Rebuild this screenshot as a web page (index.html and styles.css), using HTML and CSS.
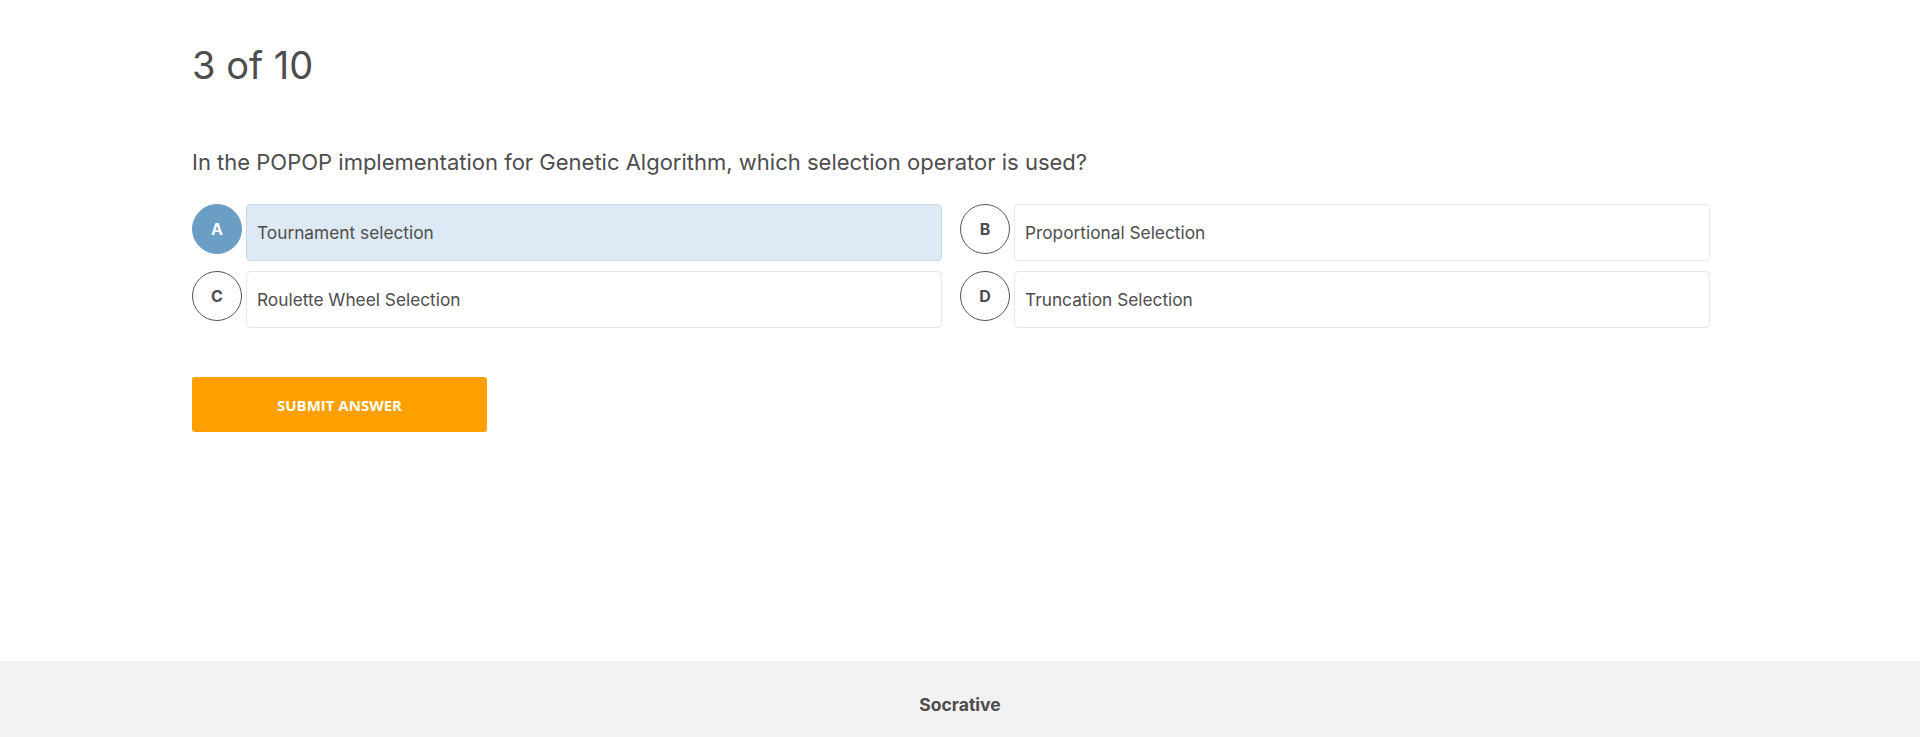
FILE: index.html
```html
<!DOCTYPE html>
<html lang="en">
<head>
<meta charset="utf-8">
<title>Socrative</title>
<link rel="stylesheet" href="styles.css">
</head>
<body>
<div class="page">
  <main class="main">
    <h1 class="progress">3 of 10</h1>
    <p class="question">In the POPOP implementation for Genetic Algorithm, which selection operator is used?</p>
    <div class="options">
      <div class="option selected">
        <span class="letter">A</span>
        <span class="answer">Tournament selection</span>
      </div>
      <div class="option">
        <span class="letter">B</span>
        <span class="answer">Proportional Selection</span>
      </div>
      <div class="option">
        <span class="letter">C</span>
        <span class="answer">Roulette Wheel Selection</span>
      </div>
      <div class="option">
        <span class="letter">D</span>
        <span class="answer">Truncation Selection</span>
      </div>
    </div>
    <button class="submit" type="button">SUBMIT ANSWER</button>
  </main>
  <footer class="footer">Socrative</footer>
</div>
</body>
</html>
```
FILE: styles.css
```css
* { box-sizing: border-box; }
html, body { margin: 0; padding: 0; }
body {
  font-family: Inter, "Noto Sans", sans-serif;
  color: #4d4d4d;
  background: #ffffff;
}
.page {
  min-height: 100vh;
  display: flex;
  flex-direction: column;
}
.main {
  flex: 1;
  width: 80%;
  margin: 0 auto;
  padding-top: 41px;
}
.progress {
  margin: 0;
  font-size: 38px;
  font-weight: 400;
  line-height: 48px;
  color: #4d4d4d;
}
.question {
  margin: 58px 0 0;
  font-size: 22px;
  line-height: 30px;
}
.options {
  margin-top: 27px;
  display: grid;
  grid-template-columns: 1fr 1fr;
  row-gap: 10px;
}
.option {
  display: flex;
  align-items: flex-start;
  gap: 4px;
  margin-right: 18px;
}
.letter {
  flex: none;
  width: 50px;
  height: 50px;
  border: 1px solid #555555;
  border-radius: 50%;
  display: flex;
  align-items: center;
  justify-content: center;
  font-size: 16px;
  font-weight: 700;
  color: #4d4d4d;
}
.answer {
  flex: 1;
  height: 57px;
  display: flex;
  align-items: center;
  padding: 0 10px;
  border: 1px solid #e1e9f0;
  border-radius: 4px;
  font-size: 17.3px;
  color: #4d4d4d;
}
.selected .letter {
  background: #6b9ec5;
  border-color: #6b9ec5;
  color: #ffffff;
}
.selected .answer {
  background: #dde9f4;
  border-color: #c6d9ea;
}
.submit {
  margin-top: 49px;
  width: 295px;
  height: 55px;
  border: 0;
  border-radius: 3px;
  background: #ffa000;
  color: #ffffff;
  font-family: "Open Sans", sans-serif;
  font-size: 15px;
  font-weight: 700;
  cursor: pointer;
}
.footer {
  height: 76px;
  background: #f2f2f2;
  display: flex;
  align-items: center;
  justify-content: center;
  padding-top: 10px;
  font-size: 17.5px;
  font-weight: 700;
  color: #4d4d4d;
}
```
